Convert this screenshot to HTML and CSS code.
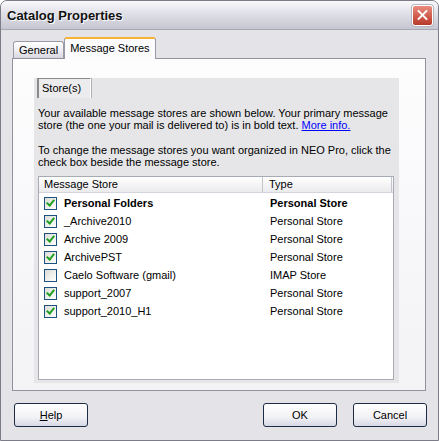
FILE: index.html
```html
<!DOCTYPE html>
<html lang="en">
<head>
    <meta charset="UTF-8">
    <title>Catalog Properties</title>
    <link rel="stylesheet" href="styles.css">
</head>
<body>
    <div class="window">
        <div class="titlebar">
            <span class="title">Catalog Properties</span>
            <span class="close"></span>
        </div>
        <div class="tabs">
            <div class="tab">General</div>
            <div class="tab active">Message Stores</div>
        </div>
        <div class="tab-panel">
            <div class="stores">
                <div class="stores-tab">Store(s)</div>
                <p class="info">Your available message stores are shown below. Your primary message<br>store (the one your mail is delivered to) is in bold text. <a href="#">More info.</a></p>
                <p class="info">To change the message stores you want organized in NEO Pro, click the<br>check box beside the message store.</p>
                <div class="list">
                    <div class="list-head">
                        <div class="col-name">Message Store</div>
                        <div class="col-type">Type</div>
                    </div>
                    <div class="row primary">
                        <div class="col-name"><span class="check on"></span>Personal Folders</div>
                        <div class="col-type">Personal Store</div>
                    </div>
                    <div class="row">
                        <div class="col-name"><span class="check on"></span>_Archive2010</div>
                        <div class="col-type">Personal Store</div>
                    </div>
                    <div class="row">
                        <div class="col-name"><span class="check on"></span>Archive 2009</div>
                        <div class="col-type">Personal Store</div>
                    </div>
                    <div class="row">
                        <div class="col-name"><span class="check on"></span>ArchivePST</div>
                        <div class="col-type">Personal Store</div>
                    </div>
                    <div class="row">
                        <div class="col-name"><span class="check"></span>Caelo Software (gmail)</div>
                        <div class="col-type">IMAP Store</div>
                    </div>
                    <div class="row">
                        <div class="col-name"><span class="check on"></span>support_2007</div>
                        <div class="col-type">Personal Store</div>
                    </div>
                    <div class="row">
                        <div class="col-name"><span class="check on"></span>support_2010_H1</div>
                        <div class="col-type">Personal Store</div>
                    </div>
                </div>
            </div>
        </div>
        <div class="buttons">
            <button class="btn"><u>H</u>elp</button>
            <span class="spacer"></span>
            <button class="btn">OK</button>
            <button class="btn">Cancel</button>
        </div>
    </div>
</body>
</html>
```
FILE: styles.css
```css
body {
    margin: 0;
    background: #fff;
    font-family: "Liberation Sans", Arial, sans-serif;
    font-size: 11px;
    color: #000;
}
.window {
    width: 439px;
    height: 441px;
    box-sizing: border-box;
    border: 1px solid #7c7c88;
    border-radius: 7px 7px 0 0;
    background: #e3e3e8;
    overflow: hidden;
}
.titlebar {
    height: 29px;
    display: flex;
    align-items: center;
    justify-content: space-between;
    padding: 1px 5px 0 6px;
    box-sizing: border-box;
    background: linear-gradient(#fafafc, #e2e2ea 40%, #c6c6d2);
    border-bottom: 1px solid #a8a8b4;
}
.title {
    font-weight: bold;
    font-size: 13px;
    color: #111;
    text-shadow: 1px 1px 0 #fff;
}
.close {
    position: relative;
    width: 19px;
    height: 19px;
    border: 1px solid #fff;
    border-radius: 3px;
    background: linear-gradient(#e98d80, #cf5646 60%, #b53a2e);
    box-shadow: 0 0 0 1px #b6b6c0;
}
.close::before,
.close::after {
    content: "";
    position: absolute;
    left: 3px;
    top: 8px;
    width: 13px;
    height: 2px;
    background: #fff;
    transform: rotate(45deg);
}
.close::after {
    transform: rotate(-45deg);
}
.tabs {
    display: flex;
    align-items: flex-end;
    margin: 7px 0 0 12px;
    height: 21px;
}
.tab {
    height: 16px;
    padding: 0 5px;
    border: 1px solid #9a9aa6;
    border-bottom: none;
    border-radius: 3px 3px 0 0;
    background: linear-gradient(#fff, #ecebf0 60%, #d6d6de);
    line-height: 17px;
    font-size: 11px;
}
.tab.active {
    height: 20px;
    padding: 0 5px;
    margin-bottom: -1px;
    background: #fcfcfe;
    border-top: 2px solid #f7b434;
    line-height: 18px;
    position: relative;
    z-index: 1;
}
.tab-panel {
    width: 414px;
    height: 333px;
    box-sizing: border-box;
    margin-left: 11px;
    border: 1px solid #92929e;
    background: linear-gradient(#fdfdfe, #f3f3f6);
    padding: 19px 0 0 21px;
}
.stores {
    width: 365px;
    height: 305px;
    box-sizing: border-box;
    background: #e6e6e8;
    padding: 0 0 0 4px;
}
.stores-tab {
    width: 54px;
    height: 20px;
    box-sizing: border-box;
    margin-left: -1px;
    border-left: 2px solid #8a8a8a;
    border-top: 1px solid #8a8a8a;
    border-right: 1px solid #fff;
    box-shadow: 1px 0 0 #b0b0b4;
    padding-left: 3px;
    line-height: 19px;
    background: #ececee;
}
.info {
    margin: 9px 0 13px 0;
    line-height: 12px;
    white-space: nowrap;
}
.info + .info {
    margin-top: 0;
    margin-bottom: 8px;
}
.info a {
    color: #0000ff;
}
.list {
    width: 356px;
    height: 204px;
    box-sizing: border-box;
    border: 1px solid #a7abb4;
    background: #fff;
}
.list-head {
    display: flex;
    height: 15px;
    line-height: 15px;
    background: linear-gradient(#fff, #ebebee);
    border-bottom: 1px solid #d4d4dc;
}
.list-head .col-name {
    width: 218px;
    padding-left: 5px;
    border-right: 1px solid #c4c4cc;
}
.list-head .col-type {
    padding-left: 6px;
    flex: 1;
    border-right: 1px solid #c4c4cc;
    margin-right: 1px;
}
.list-head + .row {
    margin-top: 1px;
}
.row {
    display: flex;
    height: 18px;
    align-items: center;
}
.row .col-name {
    width: 219px;
    display: flex;
    align-items: center;
    padding-left: 5px;
}
.row .col-type {
    padding-left: 7px;
}
.row.primary {
    font-weight: bold;
}
.check {
    position: relative;
    width: 11px;
    height: 11px;
    border: 1px solid #1c5180;
    background: linear-gradient(135deg, #dcdcd6, #fff);
    margin-right: 7px;
}
.check.on::after {
    content: "";
    position: absolute;
    left: 3px;
    top: 0;
    width: 3px;
    height: 6px;
    border-right: 2px solid #21a121;
    border-bottom: 2px solid #21a121;
    transform: rotate(40deg);
}
.buttons {
    display: flex;
    align-items: center;
    padding: 12px 11px 0 13px;
    gap: 16px;
}
.spacer {
    flex: 1;
}
.btn {
    width: 74px;
    height: 24px;
    border: 1px solid #1d2c44;
    border-radius: 3px;
    background: linear-gradient(#fff, #f2f2f6 60%, #d6d8e4);
    font-family: "Liberation Sans", Arial, sans-serif;
    font-size: 11px;
    color: #000;
    padding: 0;
}
```
